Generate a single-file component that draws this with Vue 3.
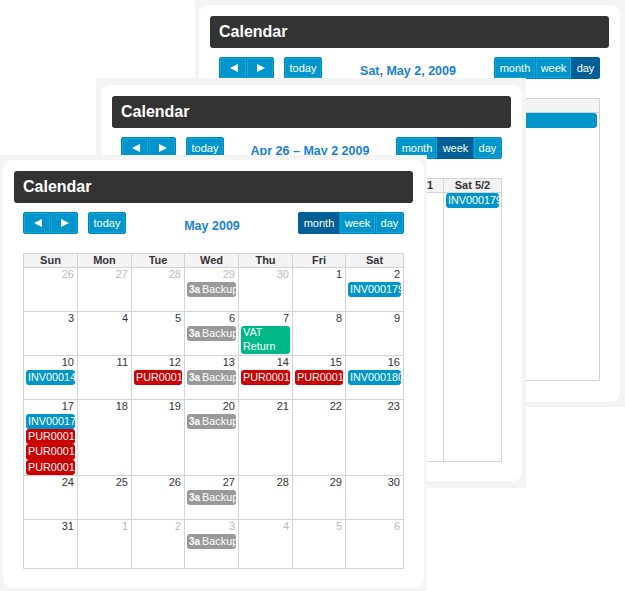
<script setup>
const BACKUP = { time: '3a', title: 'Backup', kind: 'grey' }
const inv = (title) => ({ title, kind: 'blue' })
const pur = (title) => ({ title, kind: 'red' })
const vat = { title: 'VAT Return', kind: 'green', wrap: true }

const colWidths = [54, 54, 53, 54, 54, 53, 58]

function monthRows() {
  const rows = [
    { height: 43, start: 26, events: { 3: [BACKUP], 6: [inv('INV000179')] } },
    { height: 43, start: 3, events: { 3: [BACKUP], 4: [vat] } },
    { height: 43, start: 10, events: { 0: [inv('INV000146')], 2: [pur('PUR00014')], 3: [BACKUP], 4: [pur('PUR00015')], 5: [pur('PUR00016')], 6: [inv('INV000180')] } },
    { height: 75, start: 17, events: { 0: [inv('INV000175'), pur('PUR00017'), pur('PUR00018'), pur('PUR00019')], 3: [BACKUP] } },
    { height: 43, start: 24, events: { 3: [BACKUP] } },
    { height: 48, start: 31, events: { 3: [BACKUP] } }
  ]
  return rows.map((row, r) => ({
    height: row.height,
    cells: colWidths.map((_, c) => {
      let n = row.start + c
      let muted = false
      if (r === 0) {
        if (n > 30) n -= 30
        else if (c < 5) muted = true
        if (c >= 5) n = c - 4
      } else if (r === 5 && c > 0) {
        n = c
        muted = true
      }
      return { n, muted, events: row.events[c] || [] }
    })
  }))
}

const views = [
  {
    id: 'day',
    title: 'Sat, May 2, 2009',
    active: 'day',
    widths: [380],
    heads: ['Sat 5/2'],
    rows: [{ height: 267, cells: [{ events: [inv('INV000179')] }] }]
  },
  {
    id: 'week',
    title: 'Apr 26 – May 2 2009',
    active: 'week',
    widths: colWidths,
    heads: ['Sun 4/26', 'Mon 4/27', 'Tue 4/28', 'Wed 4/29', 'Thu 4/30', 'Fri 5/1', 'Sat 5/2'],
    rows: [{ height: 268, cells: colWidths.map((_, c) => ({ events: c === 6 ? [inv('INV000179')] : [] })) }]
  },
  {
    id: 'month',
    title: 'May 2009',
    active: 'month',
    widths: colWidths,
    heads: ['Sun', 'Mon', 'Tue', 'Wed', 'Thu', 'Fri', 'Sat'],
    rows: monthRows()
  }
]

const modes = ['month', 'week', 'day']
</script>

<template>
  <div class="desktop">
    <section v-for="view in views" :key="view.id" class="frame" :class="'frame-' + view.id">
      <div class="card">
        <h2 class="card-title">Calendar</h2>
        <div class="toolbar">
          <div class="tools-left">
            <div class="btn-group">
              <button type="button" class="btn btn-arrow">
                <svg width="8" height="8" viewBox="0 0 8 8"><polygon points="0,4 8,0 8,8" fill="#fff" /></svg>
              </button>
              <button type="button" class="btn btn-arrow">
                <svg width="8" height="8" viewBox="0 0 8 8"><polygon points="8,4 0,0 0,8" fill="#fff" /></svg>
              </button>
            </div>
            <button type="button" class="btn btn-today">today</button>
          </div>
          <div class="range">{{ view.title }}</div>
          <div class="btn-group">
            <button
              v-for="mode in modes"
              :key="mode"
              type="button"
              class="btn"
              :class="['btn-' + mode, { active: mode === view.active }]"
            >{{ mode }}</button>
          </div>
        </div>
        <table class="grid">
          <colgroup>
            <col v-for="(w, i) in view.widths" :key="i" :style="{ width: w + 'px' }" />
          </colgroup>
          <thead>
            <tr>
              <th v-for="head in view.heads" :key="head">{{ head }}</th>
            </tr>
          </thead>
          <tbody>
            <tr v-for="(row, r) in view.rows" :key="r">
              <td v-for="(cell, c) in row.cells" :key="c" :style="{ height: row.height + 'px' }">
                <div v-if="cell.n" class="day-num" :class="{ muted: cell.muted }">{{ cell.n }}</div>
                <div
                  v-for="(ev, e) in cell.events"
                  :key="e"
                  class="event"
                  :class="['event-' + ev.kind, { wrap: ev.wrap }]"
                >
                  <b v-if="ev.time">{{ ev.time }}</b> {{ ev.title }}
                </div>
              </td>
            </tr>
          </tbody>
        </table>
      </div>
    </section>
  </div>
</template>

<style scoped>
.desktop {
  position: relative;
  width: 625px;
  height: 591px;
  overflow: hidden;
  background: #fff;
  font-family: "Liberation Sans", Arial, sans-serif;
}

.frame {
  position: absolute;
  background: #f4f4f4;
  box-sizing: border-box;
}

.frame-day {
  left: 195px;
  top: 0;
  width: 430px;
  height: 407px;
  padding: 5px 5px 5px 4px;
}

.frame-week {
  left: 96px;
  top: 78px;
  width: 430px;
  height: 410px;
  padding: 7px 4px 7px 5px;
}

.frame-month {
  left: 0;
  top: 155px;
  width: 427px;
  height: 436px;
  padding: 5px 3px 3px 3px;
}

.card {
  height: 100%;
  box-sizing: border-box;
  padding: 11px;
  background: #fff;
  border-radius: 9px;
}

.card-title {
  margin: 0;
  height: 32px;
  padding-left: 9px;
  background: #333;
  border-radius: 3px;
  color: #fff;
  font-size: 16px;
  font-weight: bold;
  line-height: 31px;
}

.toolbar {
  display: flex;
  align-items: flex-start;
  justify-content: space-between;
  margin: 9px 9px 20px;
  height: 21px;
}

.tools-left {
  display: flex;
  gap: 10px;
}

.btn-group {
  display: flex;
}

.btn {
  height: 22px;
  margin: 0;
  padding: 0;
  border: 1px solid #0086b8;
  border-radius: 0;
  background: #0096cc;
  color: #fff;
  font-family: inherit;
  font-size: 11px;
  line-height: 18px;
  box-shadow: inset 0 0 0 1px #12a5da;
}

.btn + .btn {
  margin-left: -1px;
}

.btn-group .btn:first-child,
.btn-today {
  border-top-left-radius: 2px;
  border-bottom-left-radius: 2px;
}

.btn-group .btn:last-child,
.btn-today {
  border-top-right-radius: 2px;
  border-bottom-right-radius: 2px;
}

.btn.active {
  background: #005f96;
  border-color: #005f96;
  box-shadow: none;
}

.btn-arrow {
  width: 28px;
  padding-left: 2px;
  display: flex;
  align-items: center;
  justify-content: center;
}

.btn-today {
  width: 38px;
}

.btn-month {
  width: 42px;
}

.btn-week {
  width: 37px;
}

.btn-day {
  width: 29px;
}

.range {
  padding-top: 7px;
  color: #1a7fdb;
  font-size: 12.5px;
  font-weight: bold;
  line-height: 15px;
  white-space: nowrap;
}

.grid {
  width: 380px;
  margin-left: 9px;
  table-layout: fixed;
  border-collapse: collapse;
  background: #fff;
}

.grid th,
.grid td {
  border: 1px solid #d4d4d4;
  padding: 0;
}

.grid th {
  height: 13px;
  background: #f3f3f3;
  color: #333;
  font-size: 11px;
  font-weight: bold;
  line-height: 13px;
  text-align: center;
  white-space: nowrap;
  overflow: hidden;
}

.grid td {
  vertical-align: top;
}

.day-num {
  height: 14px;
  padding-right: 3px;
  color: #333;
  font-size: 11px;
  line-height: 13px;
  text-align: right;
}

.day-num.muted {
  color: #bbb;
}

.event {
  height: 15.2px;
  margin: 0 2px;
  padding-left: 2px;
  overflow: hidden;
  border-radius: 3px;
  color: #fff;
  font-size: 10.8px;
  line-height: 15px;
  white-space: nowrap;
}

.event b {
  margin-right: -1px;
  font-size: 10px;
}

.event.wrap {
  height: 28px;
  line-height: 13.5px;
  white-space: normal;
}

.event-blue {
  background: #0096cc;
}

.event-red {
  background: #cc0000;
}

.event-grey {
  background: #999;
}

.event-green {
  background: #00b887;
}
</style>

<style>
html,
body {
  margin: 0;
  background: #fff;
}
</style>
